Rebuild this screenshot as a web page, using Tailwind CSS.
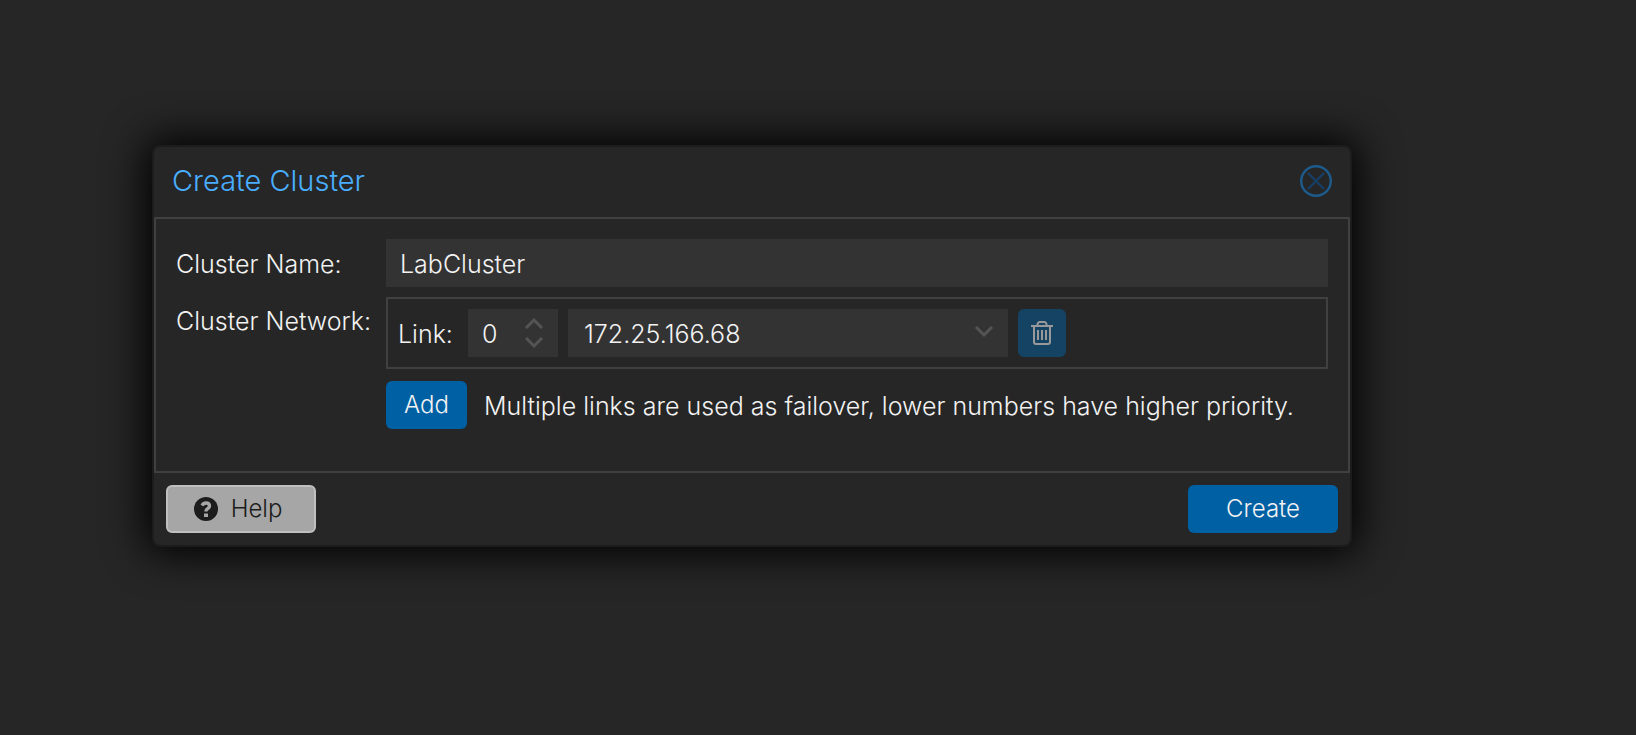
<!DOCTYPE html>
<html lang="en">
<head>
<meta charset="utf-8">
<title>Create Cluster</title>
<script src="https://cdn.jsdelivr.net/npm/@tailwindcss/browser@4"></script>
</head>
<body class="min-h-screen bg-[#262626] pt-[145px] pr-[284px] pb-10 pl-[152px] font-['Inter','Liberation_Sans',sans-serif] text-[25px] leading-8 font-light text-[#f2f2f2]">
<form role="dialog" aria-labelledby="title" class="rounded-lg border-2 border-[#1c1c1c] bg-[#262626] shadow-[0_0_40px_6px_#000]">
  <header class="flex h-[70px] items-center justify-between px-[18px] pb-0.5">
    <h1 id="title" class="text-[29px] text-[#4aaeff]">Create Cluster</h1>
    <button type="button" aria-label="Close" class="size-8">
      <svg viewBox="0 0 32 32" class="size-8" fill="none"><circle cx="16" cy="16" r="14.800" stroke="#1c5b8c" stroke-width="2.400"/><path d="M8 8l16 16M24 8L8 24" stroke="#173f66" stroke-width="2.400"/></svg>
    </button>
  </header>
  <section class="grid grid-cols-[210px_1fr] gap-x-2 gap-y-[10px] border-2 border-[#404040] pt-5 pr-5 pb-[42px] pl-3">
    <label for="name" class="flex h-12 items-center pt-0.5 pl-2">Cluster Name:</label>
    <input id="name" type="text" value="LabCluster" class="h-12 w-full min-w-0 bg-[#333] px-[14px] pt-0.5 outline-none">
    <div class="h-12 pt-2 pl-2 whitespace-nowrap">Cluster Network:</div>
    <div>
      <div class="flex items-center border-2 border-[#404040] p-[10px]">
        <label for="link" class="w-[70px] pt-0.5">Link:</label>
        <div class="flex h-12 w-[90px] items-center bg-[#333] px-[14px]">
          <input id="link" type="text" inputmode="numeric" value="0" class="w-full min-w-0 pt-0.5 outline-none">
          <div class="flex flex-col gap-2">
            <button type="button" aria-label="Increase link number"><svg viewBox="0 0 20 12" class="h-3 w-5" fill="none" stroke="#545454" stroke-width="3"><path d="M2 11l8-8 8 8"/></svg></button>
            <button type="button" aria-label="Decrease link number"><svg viewBox="0 0 20 12" class="h-3 w-5" fill="none" stroke="#545454" stroke-width="3"><path d="M2 1l8 8 8-8"/></svg></button>
          </div>
        </div>
        <div class="relative ml-[10px] h-12 w-[440px]">
          <select aria-label="Network address" class="size-full appearance-none bg-[#333] px-4 pt-0.5 outline-none"><option>172.25.166.68</option></select>
          <svg viewBox="0 0 20 12" class="pointer-events-none absolute top-[17px] right-[14px] h-3 w-5" fill="none" stroke="#545454" stroke-width="3"><path d="M2 1l8 8 8-8"/></svg>
        </div>
        <button type="button" aria-label="Remove link" class="ml-[10px] flex size-12 items-center justify-center rounded-md bg-[#144364]">
          <svg viewBox="0 0 22 24" class="h-6 w-[22px]" fill="none" stroke="#999" stroke-width="2"><path d="M0 5h22M3 5v16q0 2 2 2h12q2 0 2-2V5M6 5l1-3q.5-1 1.500-1h5q1 0 1.500 1l1 3M7 9v10M11 9v10M15 9v10"/></svg>
        </button>
      </div>
      <div class="mt-3 flex items-center">
        <button type="button" class="h-12 w-[81px] rounded-md bg-[#0060a4] text-[24px]">Add</button>
        <p class="ml-[17px] pt-0.5 whitespace-nowrap">Multiple links are used as failover, lower numbers have higher priority.</p>
      </div>
    </div>
  </section>
  <footer class="flex items-center justify-between p-3">
    <button type="button" class="flex h-12 w-[150px] items-center justify-center gap-[13px] rounded-md border-2 border-[#bfbfbf] bg-[#a6a6a6] pr-1.5 text-[24px] text-[#1c1c1c]">
      <svg viewBox="0 0 24 24" class="size-6"><circle cx="12" cy="12" r="12" fill="#1c1c1c"/><path d="M8 8.500Q9.500 6 12 6q3.500 0 3.500 3 0 1.500-1.800 2.700T12 14.500" fill="none" stroke="#a6a6a6" stroke-width="3.400"/><path d="M10 16.500h4V20h-4z" fill="#a6a6a6"/></svg>
      Help
    </button>
    <button type="submit" class="h-12 w-[150px] rounded-md bg-[#0060a4] text-[24px]">Create</button>
  </footer>
</form>
</body>
</html>
